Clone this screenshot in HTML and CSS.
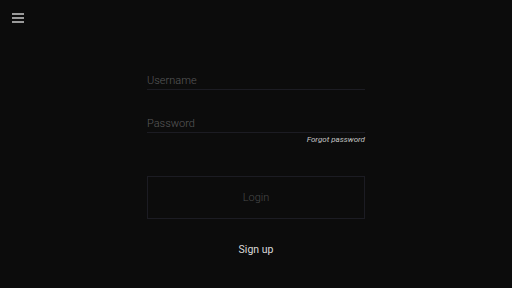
FILE: index.html
```html
<!DOCTYPE html>
<html lang="en">
<head>
    <meta charset="UTF-8">
    <meta name="viewport" content="width=device-width, initial-scale=1.0">
    <title>Login</title>
    <link rel="stylesheet" href="styles.css">
</head>
<body>
    <header class="top-bar">
        <button class="menu-button" aria-label="Menu">
            <span class="menu-line"></span>
            <span class="menu-line"></span>
            <span class="menu-line"></span>
        </button>
    </header>

    <main class="login-form">
        <div class="field">
            <input type="text" placeholder="Username" aria-label="Username">
        </div>
        <div class="field password-field">
            <input type="password" placeholder="Password" aria-label="Password">
        </div>
        <a class="forgot-link" href="#">Forgot password</a>

        <button class="login-button">Login</button>
        <a class="signup-link" href="#">Sign up</a>
    </main>
</body>
</html>
```

FILE: styles.css
```css
:root {
    --bg-color: #0c0c0c;
    --line-color: #1c1c23;
    --hint-color: #5a5a5a;
    --muted-color: #4a4a4a;
    --text-color: #dadada;
}

* {
    margin: 0;
    padding: 0;
    box-sizing: border-box;
}

body {
    font-family: 'Roboto', 'Liberation Sans', sans-serif;
    font-weight: 300;
    background: var(--bg-color);
    width: 512px;
    height: 288px;
    overflow: hidden;
}

.top-bar {
    display: flex;
    padding: 13px 0 0 12px;
    height: 73px;
}

.menu-button {
    display: flex;
    flex-direction: column;
    gap: 2px;
    width: 12px;
    background: none;
    border: none;
    cursor: pointer;
}

.menu-line {
    display: block;
    height: 2px;
    background: #9a9a9a;
}

.login-form {
    display: flex;
    flex-direction: column;
    width: 218px;
    margin: 0 auto;
}

.field {
    border-bottom: 1px solid var(--line-color);
    padding: 1px 0 2px;
}

.password-field {
    margin-top: 26px;
}

.field input {
    display: block;
    width: 100%;
    height: 13px;
    font-family: inherit;
    font-weight: 300;
    font-size: 11px;
    line-height: 13px;
    color: var(--text-color);
    background: none;
    border: none;
    outline: none;
}

.field input::placeholder {
    color: var(--hint-color);
}

.forgot-link {
    align-self: flex-end;
    margin-top: 2px;
    font-size: 8px;
    line-height: 10px;
    font-weight: 400;
    font-style: italic;
    color: #c4c4c4;
    text-decoration: none;
}

.login-button {
    margin-top: 31px;
    height: 43px;
    font-family: inherit;
    font-weight: 300;
    font-size: 11px;
    color: var(--muted-color);
    background: none;
    border: 1px solid var(--line-color);
    cursor: pointer;
}

.signup-link {
    align-self: center;
    margin-top: 24px;
    font-size: 10.5px;
    font-weight: 400;
    line-height: 13px;
    color: var(--text-color);
    text-decoration: none;
}
```
